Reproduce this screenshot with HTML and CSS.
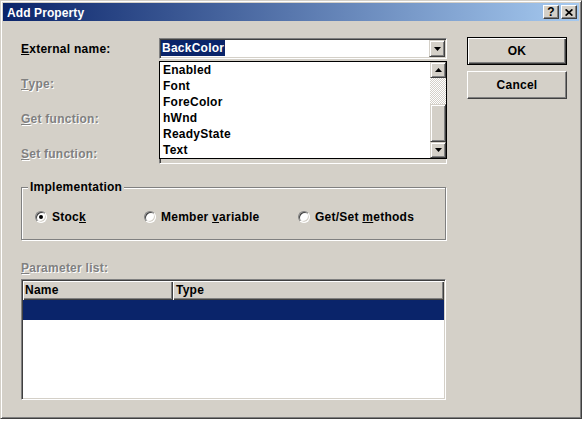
FILE: index.html
```html
<!DOCTYPE html>
<html>
<head>
<meta charset="utf-8">
<title>Add Property</title>
<link rel="stylesheet" href="styles.css">
</head>
<body>
<div class="window">
  <div class="titlebar">
    <span class="title">Add Property</span>
    <div class="caption-btns">
      <span class="cbtn help">?</span>
      <span class="cbtn close"><svg width="8" height="7" viewBox="0 0 8 7"><path d="M0.6 0.4 L7.4 6.6 M7.4 0.4 L0.6 6.6" stroke="#000" stroke-width="1.7" fill="none"/></svg></span>
    </div>
  </div>
  <div class="client">
    <div class="top">
      <div class="fields">
        <div class="lbl"><u>E</u>xternal name:</div>
        <div class="combo-wrap">
          <div class="combo sunken">
            <span class="sel">BackColor</span>
            <span class="ddbtn raised"><svg width="7" height="4" viewBox="0 0 7 4"><polygon points="0,0 7,0 3.5,4" fill="#000"/></svg></span>
          </div>
          <div class="dropdown">
            <ul class="items">
              <li>Enabled</li>
              <li>Font</li>
              <li>ForeColor</li>
              <li>hWnd</li>
              <li>ReadyState</li>
              <li>Text</li>
            </ul>
            <div class="vscroll">
              <span class="sbtn raised"><svg width="7" height="4" viewBox="0 0 7 4"><polygon points="0,4 7,4 3.5,0" fill="#000"/></svg></span>
              <span class="track"></span>
              <span class="thumb raised"></span>
              <span class="sbtn raised"><svg width="7" height="4" viewBox="0 0 7 4"><polygon points="0,0 7,0 3.5,4" fill="#000"/></svg></span>
            </div>
          </div>
        </div>
        <div class="lbl disabled"><u>T</u>ype:</div>
        <div class="field sunken"></div>
        <div class="lbl disabled"><u>G</u>et function:</div>
        <div class="field sunken"></div>
        <div class="lbl disabled"><u>S</u>et function:</div>
        <div class="field sunken"></div>
      </div>
      <div class="buttons">
        <div class="btn default">OK</div>
        <div class="btn">Cancel</div>
      </div>
    </div>

    <div class="group">
      <div class="group-title">Implementation</div>
      <div class="radios">
        <div class="radio-item"><span class="radio checked"></span><span>Stoc<u>k</u></span></div>
        <div class="radio-item"><span class="radio"></span><span>Member <u>v</u>ariable</span></div>
        <div class="radio-item"><span class="radio"></span><span>Get/Set <u>m</u>ethods</span></div>
      </div>
    </div>

    <div class="lbl disabled param-label"><u>P</u>arameter list:</div>
    <div class="list sunken">
      <div class="list-head">
        <span class="hcell name">Name</span>
        <span class="hcell type">Type</span>
      </div>
      <div class="list-row selected"></div>
    </div>
  </div>
</div>
</body>
</html>
```

FILE: styles.css
```css
* { box-sizing: border-box; }

html, body {
  margin: 0;
  padding: 0;
  background: #ffffff;
}

body {
  font-family: "Liberation Sans", Arial, sans-serif;
  font-size: 12px;
  font-weight: bold;
  letter-spacing: 0.25px;
  color: #000;
}

.window {
  width: 582px;
  height: 419px;
  background: #d4d0c8;
  border: 1px solid;
  border-color: #d4d0c8 #404040 #404040 #d4d0c8;
  box-shadow: inset 1px 1px #ffffff, inset -1px -1px #808080;
  padding: 2px;
  display: flex;
  flex-direction: column;
}

/* ---------- title bar ---------- */
.titlebar {
  height: 18px;
  flex: none;
  display: flex;
  align-items: center;
  justify-content: space-between;
  background: linear-gradient(to right, #0a246a, #a6caf0);
  padding: 0 2px 0 4px;
}

.title {
  color: #ffffff;
  line-height: 18px;
  letter-spacing: 0.1px;
  padding-top: 1px;
}

.caption-btns {
  display: flex;
  gap: 2px;
}

.cbtn {
  width: 16px;
  height: 14px;
  background: #d4d0c8;
  border: 1px solid;
  border-color: #ffffff #404040 #404040 #ffffff;
  box-shadow: inset -1px -1px #808080;
  display: flex;
  align-items: center;
  justify-content: center;
  font-size: 12px;
  line-height: 12px;
  letter-spacing: 0;
}

.help { padding-bottom: 1px; }

/* ---------- common 3D ---------- */
.sunken {
  border: 1px solid;
  border-color: #808080 #ffffff #ffffff #808080;
  box-shadow: inset 1px 1px #404040, inset -1px -1px #d4d0c8;
  padding: 1px;
}

.raised {
  background: #d4d0c8;
  border: 1px solid;
  border-color: #d4d0c8 #404040 #404040 #d4d0c8;
  box-shadow: inset 1px 1px #ffffff, inset -1px -1px #808080;
}

.disabled {
  color: #808080;
  text-shadow: 1px 1px 0 #ffffff;
}

/* ---------- client ---------- */
.client {
  flex: 1;
  padding: 17px 0 0 18px;
}

.top {
  display: flex;
  align-items: flex-start;
}

.fields {
  display: grid;
  grid-template-columns: 138px 288px;
  grid-auto-rows: 21px;
  row-gap: 14px;
}

.lbl {
  display: flex;
  align-items: center;
  line-height: 14px;
  white-space: nowrap;
}

.combo-wrap {
  position: relative;
}

.combo {
  height: 21px;
  background: #ffffff;
  display: flex;
  align-items: flex-start;
  justify-content: space-between;
}

.sel {
  background: #0a246a;
  color: #ffffff;
  line-height: 16px;
  height: 16px;
  padding: 0 1px;
}

.ddbtn {
  width: 16px;
  height: 17px;
  display: flex;
  align-items: center;
  justify-content: center;
}

.dropdown {
  position: absolute;
  top: 23px;
  left: 0;
  width: 288px;
  height: 98px;
  background: #ffffff;
  border: 1px solid #000000;
  display: flex;
  z-index: 2;
}

.items {
  list-style: none;
  margin: 0;
  padding: 0;
  flex: 1;
}

.items li {
  height: 16px;
  line-height: 16px;
  padding-left: 3px;
}

.vscroll {
  width: 16px;
  display: flex;
  flex-direction: column;
}

.sbtn {
  height: 16px;
  flex: none;
  display: flex;
  align-items: center;
  justify-content: center;
}

.track {
  height: 26px;
  flex: none;
  background-color: #ffffff;
  background-image: repeating-conic-gradient(#d4d0c8 0% 25%, #ffffff 0% 50%);
  background-size: 2px 2px;
}

.thumb {
  flex: 1;
}

.field {
  height: 21px;
  background: #d4d0c8;
}

.buttons {
  margin: -1px 0 0 20px;
  display: flex;
  flex-direction: column;
  gap: 6px;
}

.btn {
  width: 100px;
  height: 28px;
  background: #d4d0c8;
  border: 1px solid;
  border-color: #ffffff #404040 #404040 #ffffff;
  box-shadow: inset -1px -1px #808080;
  display: flex;
  align-items: center;
  justify-content: center;
  padding-bottom: 1px;
}

.btn.default {
  border: 1px solid #000000;
  box-shadow: inset 1px 1px #ffffff, inset -1px -1px #404040, inset -2px -2px #808080;
}

/* ---------- group ---------- */
.group {
  margin-top: 23px;
  width: 425px;
  height: 53px;
  border: 1px solid #808080;
  box-shadow: inset 1px 1px #ffffff, 1px 1px 0 #ffffff;
}

.group-title {
  display: block;
  width: fit-content;
  height: 14px;
  margin: -8px 0 0 6px;
  padding: 0 2px 0 2px;
  background: #d4d0c8;
  line-height: 14px;
}

.radios {
  margin-top: 16px;
  padding-left: 13px;
  display: grid;
  grid-template-columns: 109px 154px auto;
  line-height: 14px;
}

.radio-item {
  display: flex;
  align-items: center;
  gap: 5px;
  white-space: nowrap;
}

.radio {
  width: 12px;
  height: 12px;
  flex: none;
  border-radius: 50%;
  background: #ffffff;
  border: 1px solid;
  border-color: #808080 #ffffff #ffffff #808080;
  box-shadow: inset 1px 1px #404040, inset -1px -1px #d4d0c8;
  display: flex;
  align-items: center;
  justify-content: center;
}

.radio.checked::after {
  content: "";
  width: 4px;
  height: 4px;
  border-radius: 50%;
  background: #000000;
}

/* ---------- parameter list ---------- */
.param-label {
  margin-top: 21px;
  height: 14px;
}

.list {
  margin-top: 4px;
  width: 425px;
  height: 121px;
  background: #ffffff;
}

.list-head {
  display: flex;
  height: 19px;
}

.hcell {
  background: #d4d0c8;
  box-shadow: inset 1px 1px #ffffff, inset -1px -1px #404040, inset -2px -2px #808080;
  line-height: 19px;
  padding-left: 2px;
}

.hcell.name { width: 150px; }
.hcell.type { flex: 1; padding-left: 3px; }

.list-row {
  height: 20px;
}

.list-row.selected {
  background: #0a246a;
}
```
